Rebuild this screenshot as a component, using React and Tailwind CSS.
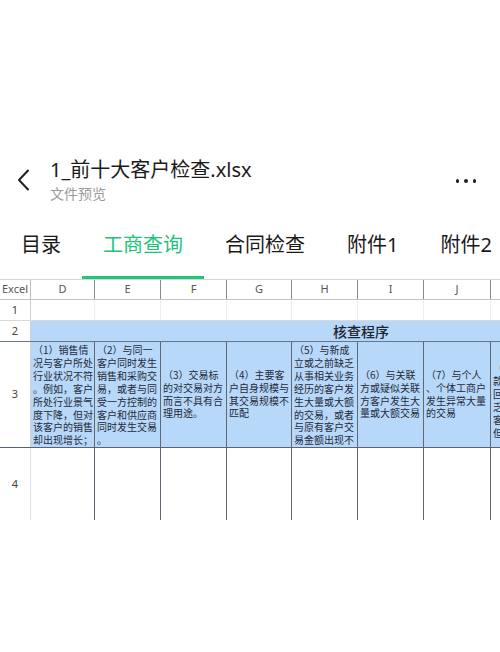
import React from 'react';

const cols = [
  { k: 'D', w: 'w-[64px]' },
  { k: 'E', w: 'w-[66px]' },
  { k: 'F', w: 'w-[66px]' },
  { k: 'G', w: 'w-[65px]' },
  { k: 'H', w: 'w-[66px]' },
  { k: 'I', w: 'w-[66px]' },
  { k: 'J', w: 'w-[67px]' },
  { k: 'K', w: 'w-[80px]' },
];

const cells = [
  { top: true, lines: ['（1）销售情', '况与客户所处', '行业状况不符', '。例如，客户', '所处行业景气', '度下降，但对', '该客户的销售', '却出现增长；'] },
  { top: true, lines: ['（2）与同一', '客户同时发生', '销售和采购交', '易，或者与同', '受一方控制的', '客户和供应商', '同时发生交易', '。'] },
  { lines: ['（3）交易标', '的对交易对方', '而言不具有合', '理用途。'] },
  { lines: ['（4）主要客', '户自身规模与', '其交易规模不', '匹配'] },
  { top: true, lines: ['（5）与新成', '立或之前缺乏', '从事相关业务', '经历的客户发', '生大量或大额', '的交易，或者', '与原有客户交', '易金额出现不'] },
  { lines: ['（6）与关联', '方或疑似关联', '方客户发生大', '量或大额交易'] },
  { lines: ['（7）与个人', '、个体工商户', '发生异常大量', '的交易'] },
  { lines: ['（8）客户付', '款与回款不一', '回款方式缺', '乏合理解释，', '客户交易频繁', '但金额较小'] },
];

const tabs = ['目录', '工商查询', '合同检查', '附件1', '附件2'];

export default function App() {
  return (
    <div className="w-[500px] h-[652px] bg-white overflow-hidden font-['Noto_Sans','Noto_Sans_CJK_SC',sans-serif]">
      <div className="h-[156px]" />

      {/* header */}
      <div className="flex items-center h-[48px]">
        <div className="w-[50px] pl-[17px] flex items-center">
          <svg width="13" height="22" viewBox="0 0 13 22" fill="none">
            <path d="M11 1.5 L2 11 L11 20.5" stroke="#222" strokeWidth="2" strokeLinecap="round" strokeLinejoin="round" />
          </svg>
        </div>
        <div className="flex-1 flex flex-col">
          <div className="text-[20px] leading-[28px] text-[#1a1a1a]">1_前十大客户检查.xlsx</div>
          <div className="text-[14px] leading-[20px] text-[#9a9a9a]">文件预览</div>
        </div>
        <div className="flex items-center gap-[5px] pr-[24px] pt-[2px]">
          <span className="w-[3.5px] h-[3.5px] rounded-full bg-[#222]" />
          <span className="w-[3.5px] h-[3.5px] rounded-full bg-[#222]" />
          <span className="w-[3.5px] h-[3.5px] rounded-full bg-[#222]" />
        </div>
      </div>

      {/* tabs */}
      <div className="flex mt-[27px] whitespace-nowrap">
        {tabs.map((t, i) => (
          <div
            key={t}
            className={
              i === 1
                ? 'px-[21px] pb-[17px] text-[20px] leading-[28px] text-[#1cc47b] border-b-[3px] border-[#22c57e]'
                : 'px-[21px] pb-[17px] text-[20px] leading-[28px] text-[#1a1a1a] border-b-[3px] border-transparent'
            }
          >
            {t}
          </div>
        ))}
      </div>

      {/* sheet */}
      <div className="w-[500px] overflow-hidden">
        {/* column header */}
        <div className="flex h-[21px] border-t border-b border-t-[#d6d6d6] border-b-[#c4c4c4] bg-white">
          <div className="w-[31px] shrink-0 border-r border-[#bdbdbd] text-[11px] text-[#555] flex items-center justify-center">Excel</div>
          {cols.map((c) => (
            <div key={c.k} className={`${c.w} shrink-0 border-r border-[#8a8a8a] text-[11px] text-[#555] flex items-center justify-center`}>
              {c.k}
            </div>
          ))}
        </div>

        {/* row 1 */}
        <div className="flex h-[21px] border-b border-[#d9d9d9]">
          <div className="w-[31px] shrink-0 border-r border-[#cfcfcf] text-[11px] text-[#444] flex items-center justify-center">1</div>
          {cols.map((c) => (
            <div key={c.k} className={`${c.w} shrink-0 border-r border-[#ececec]`} />
          ))}
        </div>

        {/* row 2 */}
        <div className="flex h-[21px] border-b-[1.5px] border-[#62768c]">
          <div className="w-[31px] shrink-0 border-r border-[#cfcfcf] bg-white text-[11px] text-[#444] flex items-center justify-center">2</div>
          <div className="w-[660px] shrink-0 bg-[#b7d8f8] flex items-center justify-center text-[14px] font-medium text-[#1c2530]">
            核查程序
          </div>
        </div>

        {/* row 3 */}
        <div className="flex h-[106px] border-b-[1.5px] border-[#56647a]">
          <div className="w-[31px] shrink-0 border-r border-[#cfcfcf] bg-white text-[11px] text-[#444] flex items-center justify-center">3</div>
          {cols.map((c, i) => (
            <div
              key={c.k}
              className={`${c.w} shrink-0 border-r-[1.5px] border-[#5f6875] bg-[#b7d8f8] overflow-hidden flex flex-col pl-[2px] ${
                cells[i].top ? 'justify-start pt-[2px]' : i === 7 ? 'justify-start pt-[20px]' : 'justify-center'
              }`}
            >
              {cells[i].lines.map((l, j) => (
                <div key={j} className="text-[10px] leading-[12.9px] whitespace-nowrap text-[#1f2a38] font-['Noto_Sans_CJK_SC',sans-serif]">
                  {l}
                </div>
              ))}
            </div>
          ))}
        </div>

        {/* row 4 */}
        <div className="flex h-[72px]">
          <div className="w-[31px] shrink-0 border-r border-[#e0e0e0] text-[11px] text-[#444] flex items-center justify-center">4</div>
          {cols.map((c) => (
            <div key={c.k} className={`${c.w} shrink-0 border-r-[1.5px] border-[#5f6875]`} />
          ))}
        </div>
      </div>
    </div>
  );
}
